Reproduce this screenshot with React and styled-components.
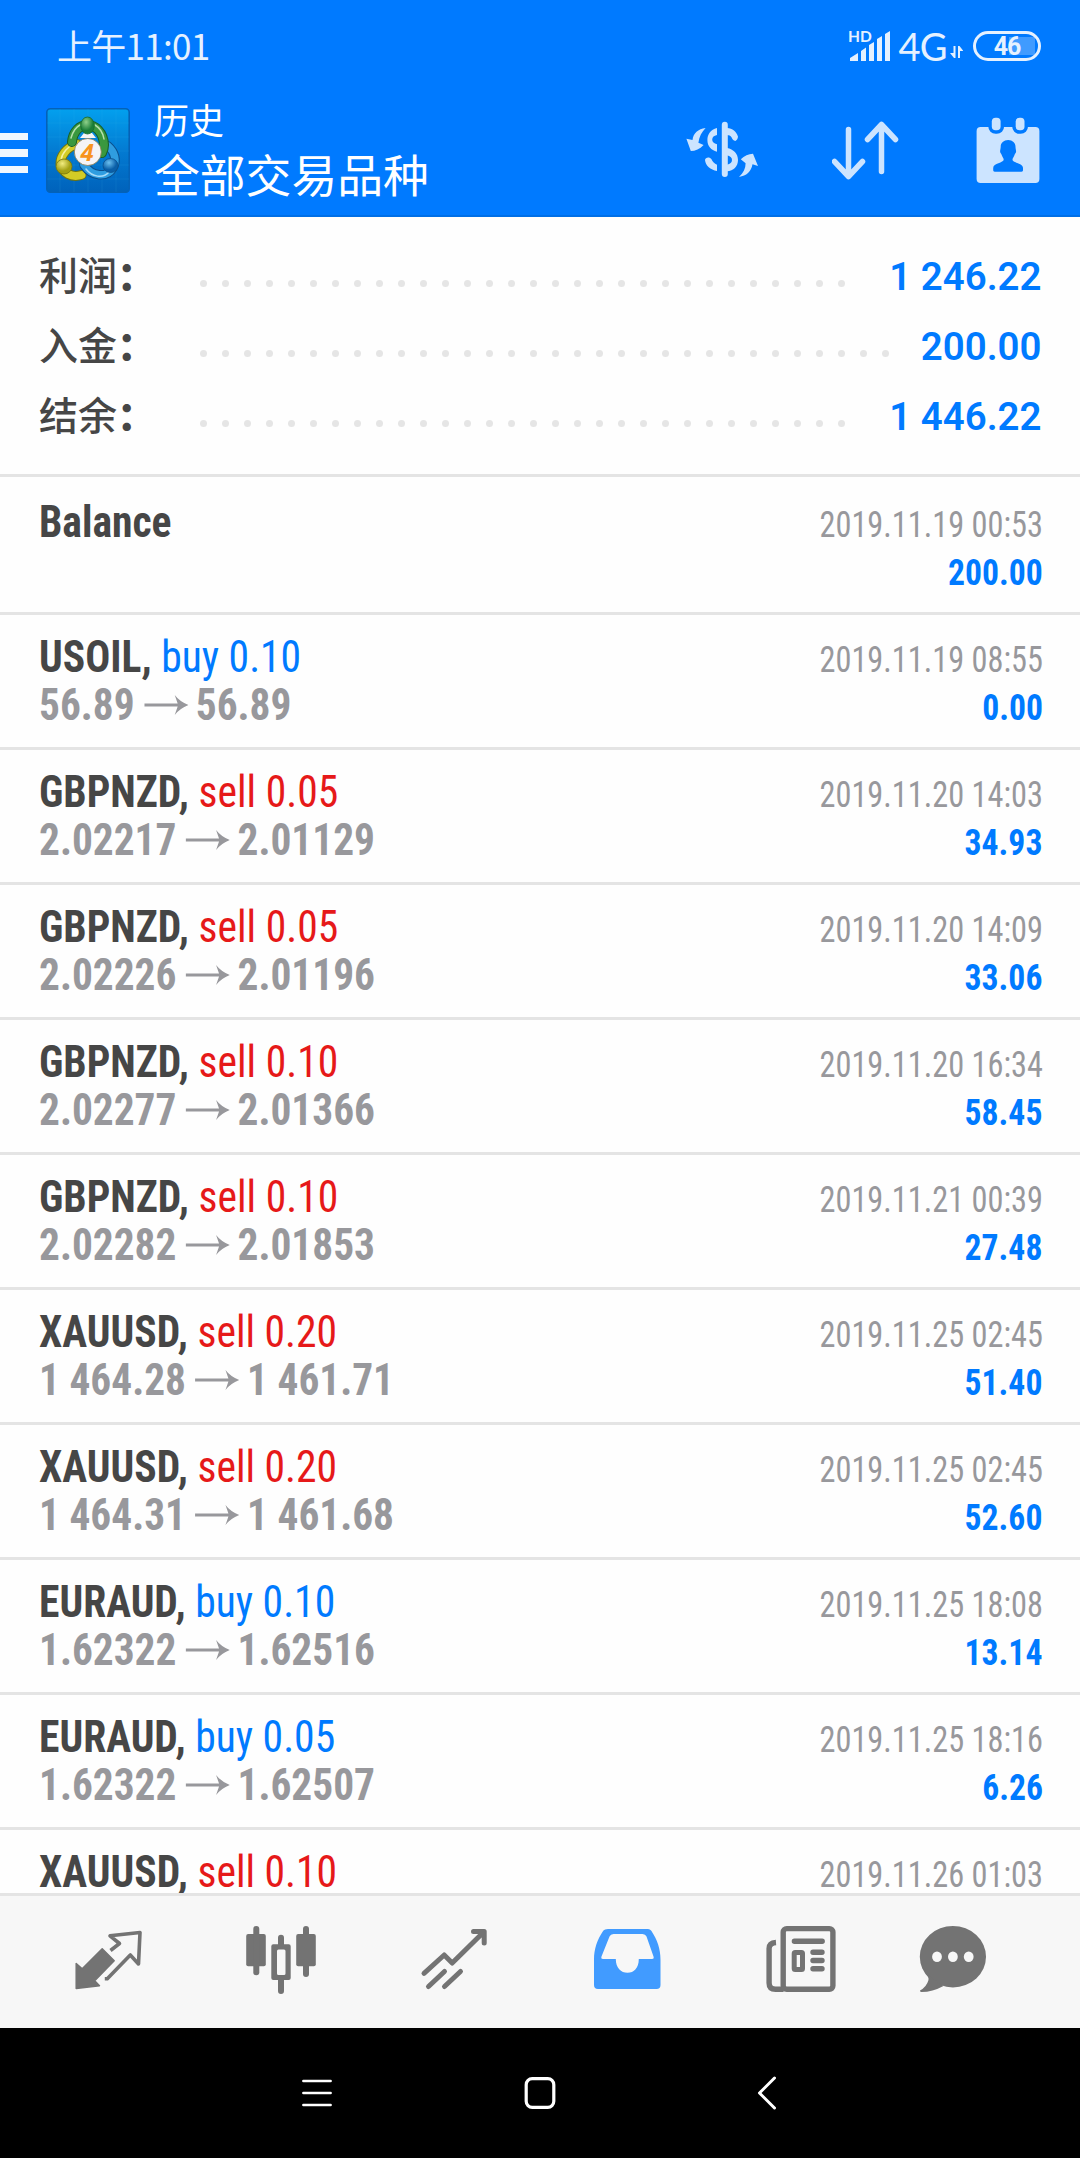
import React from "react";
import styled, { createGlobalStyle } from "styled-components";

const GlobalStyle = createGlobalStyle`
    * {
        box-sizing: border-box;
    }

    body {
        margin: 0;
        background: #fefefe;
        font-family: Roboto, "Noto Sans CJK SC", sans-serif;
    }

    svg {
        display: block;
        flex: none;
    }
`;

const Screen = styled.div`
    display: flex;
    flex-direction: column;
    width: 1080px;
    height: 2158px;
    overflow: hidden;
    background: #fefefe;
`;

const StatusBar = styled.div`
    display: flex;
    align-items: center;
    justify-content: space-between;
    height: 92px;
    padding: 0 39px 0 57px;
    background: #007aff;
`;

const Clock = styled.div`
    margin-top: -3px;
    font-family: "Noto Sans CJK SC", sans-serif;
    font-size: 35px;
    font-weight: 400;
    line-height: 40px;
    letter-spacing: -0.7px;
    color: #e5f1ff;
`;

const StatusIcons = styled.div`
    display: flex;
    align-items: center;
    color: #e5f1ff;
`;

const Network = styled.span`
    margin: 0 3px 0 7px;
    font-family: Lato, sans-serif;
    font-size: 38px;
    line-height: 38px;
    letter-spacing: -0.6px;
`;

const Battery = styled.div`
    display: flex;
    align-items: center;
    justify-content: center;
    width: 68px;
    height: 30px;
    margin-left: 10px;
    border: 3px solid #e5f1ff;
    border-radius: 15px;
    background: linear-gradient(#409bff, #409bff) 33px 3px / 26px 18px no-repeat;
    font-size: 25px;
    font-weight: 700;
    letter-spacing: -1px;
`;

const Header = styled.header`
    display: flex;
    align-items: flex-start;
    height: 125px;
    padding: 0 40px 0 0;
    border-bottom: 2px solid #006fe6;
    background: #007aff;
    color: #cce4ff;
`;

const MenuButton = styled.div`
    display: flex;
    flex-direction: column;
    gap: 9px;
    width: 28px;
    margin-top: 41px;

    span {
        height: 7.3px;
        background: #f0f7ff;
    }
`;

const LogoBox = styled.div`
    margin: 16px 24px 0 18px;
`;

const Titles = styled.div`
    flex: 1;
    color: #fff;
    font-family: "Noto Sans CJK SC", sans-serif;
    font-weight: 400;
`;

const Caption = styled.div`
    margin-top: 6px;
    font-size: 35px;
    line-height: 42px;
`;

const Heading = styled.div`
    font-size: 45.8px;
    line-height: 66px;
`;

const Actions = styled.div`
    display: flex;
    gap: 74px;
    margin-top: 24px;
`;

const Summary = styled.section`
    height: 260px;
    padding: 24px 39px 0 39px;
    border-bottom: 3px solid #e4e4e4;
`;

const SummaryRow = styled.div`
    display: flex;
    align-items: center;
    height: 70px;
`;

const SummaryLabel = styled.div`
    width: 161px;
    margin-top: -7px;
    font-family: "Noto Sans CJK SC", sans-serif;
    font-size: 39px;
    font-weight: 500;
    color: #464646;

    b {
        font-weight: 900;
    }
`;

/* dots that do not fit wrap onto a clipped second line */
const Leader = styled.div`
    display: flex;
    flex: 1;
    flex-wrap: wrap;
    gap: 15px;
    height: 7px;
    margin: 14px 27px 0 0;
    overflow: hidden;

    i {
        width: 7px;
        height: 7px;
        border-radius: 50%;
        background: #e5e5e5;
    }
`;

const SummaryValue = styled.div`
    margin-top: 2px;
    font-size: 39px;
    font-weight: 600;
    color: #007aff;
    transform: scaleX(0.985);
    transform-origin: right;
`;

const List = styled.main`
    flex: 1;
    min-height: 0;
    padding-top: 3px;
    overflow: hidden;
    font-family: "Roboto Condensed", Roboto, sans-serif;
    font-stretch: 75%;
`;

const Deal = styled.div`
    height: 135px;
    padding: 18px 37.5px 0 39px;
    border-bottom: 3px solid #e4e4e4;
`;

const Line = styled.div`
    display: flex;
    align-items: baseline;
    justify-content: space-between;
    height: 48px;
    line-height: 48px;
    white-space: pre;
`;

const Title = styled.div`
    font-size: 44px;
    transform: scaleX(0.945);
    transform-origin: left;
`;

const SymbolName = styled.span`
    font-weight: 700;
    color: #464646;
`;

const Side = styled.span`
    font-weight: 400;
    color: ${({ $type }) => ($type === "buy" ? "#007aff" : "#e61919")};
`;

const Prices = styled.div`
    display: flex;
    align-items: baseline;
    font-size: 44px;
    font-weight: 700;
    color: #98989c;
    transform: scaleX(0.94);
    transform-origin: left;

    &:empty::before {
        content: "\\200b";
    }

    svg {
        align-self: center;
        margin: 0 8px 0 10px;
    }
`;

const Time = styled.span`
    font-size: 37px;
    color: #98989c;
    transform: scaleX(0.873);
    transform-origin: right;
`;

const Profit = styled.span`
    font-size: 36.5px;
    font-weight: 700;
    color: #007aff;
    transform: scaleX(0.922);
    transform-origin: right;
`;

const TabBar = styled.nav`
    display: flex;
    gap: 97px;
    height: 135px;
    padding: 28px 0 0 71px;
    border-top: 3px solid #e4e4e4;
    background: #f7f7f7;
    color: #737373;

    svg:last-child {
        margin-left: -20px;
    }
`;

const SystemBar = styled.footer`
    display: flex;
    align-items: center;
    gap: 189px;
    height: 130px;
    padding-left: 300px;
    background: #000;
`;

const Signal = () => (
    <svg width="44" height="36" viewBox="847 26 44 36" fill="currentColor">
        <text x="848" y="40" fontSize="15.5" fontWeight="700" fontFamily="Lato, sans-serif">
            HD
        </text>
        <path d="M850 59v-3l8-5v8zM861 59V49l5-3.5V59zM869 59V43l5-3V59zM877 59V37l5-3v25zM885 59V32l5-3v30z" />
    </svg>
);

const DataArrows = () => (
    <svg width="13" height="36" viewBox="950 28 13 36" fill="currentColor">
        <path d="M953.5 46h2v12h-1.5l-4-5h3.500zM958 46h1.500l4 5h-3.500v7h-2z" />
    </svg>
);

const Logo = () => (
    <svg width="84" height="85" viewBox="46 108 84 85">
        <defs>
            <linearGradient id="tile" x1="0" y1="0" x2="0" y2="1">
                <stop offset="0" stopColor="#03a0ee" />
                <stop offset="0.5" stopColor="#037bd2" />
                <stop offset="1" stopColor="#0062bb" />
            </linearGradient>
            <radialGradient id="green" cx="0.4" cy="0.3">
                <stop offset="0" stopColor="#8fd08a" />
                <stop offset="1" stopColor="#1c7f38" />
            </radialGradient>
            <radialGradient id="yellow" cx="0.4" cy="0.3">
                <stop offset="0" stopColor="#f2ec80" />
                <stop offset="1" stopColor="#a3a012" />
            </radialGradient>
            <radialGradient id="blue" cx="0.4" cy="0.3">
                <stop offset="0" stopColor="#6cc0ef" />
                <stop offset="1" stopColor="#0a5fa8" />
            </radialGradient>
        </defs>
        <rect x="46.800" y="108.800" width="82.400" height="83.400" rx="3.500" fill="url(#tile)" stroke="#0462b8" strokeWidth="1.600" />
        <path d="M60 109v83M74 109v83M88 109v83M102 109v83M116 109v83M47 123h82M47 137h82M47 151h82M47 165h82M47 179h82" stroke="#4db9f2" strokeOpacity="0.12" />
        <g fill="none" strokeLinecap="round">
            <path d="M77 144c-10 3-17 12-16.500 20 2 9 11 14 21 11" stroke="#6f7410" strokeWidth="10" />
            <path d="M77 144c-10 3-17 12-16.500 20 2 9 11 14 21 11" stroke="#d3cc26" strokeWidth="8" />
            <path d="M76 143c-8 3-14 10-15 17" stroke="#f5f0a0" strokeWidth="1.500" />
            <path d="M108 146c7 6 9 15 5 22-6 10-21 9-29-3" stroke="#0b4f8c" strokeWidth="9.500" />
            <path d="M108 146c7 6 9 15 5 22-6 10-21 9-29-3" stroke="#2f9de0" strokeWidth="7.500" />
            <path d="M86 169c6 8 17 10 23 3" stroke="#a8dcf8" strokeWidth="1.500" />
            <path d="M72 142c1-11 8-17 15.500-17s16 7 16.500 20c0 3-.5 5-2 8" stroke="#175f26" strokeWidth="10" />
            <path d="M72 142c1-11 8-17 15.500-17s16 7 16.500 20c0 3-.5 5-2 8" stroke="#3a983f" strokeWidth="8" />
            <path d="M71 138c2-7 5-11 9-13M95 125c5 3 8 8 9 14" stroke="#b5e0ac" strokeWidth="1.500" />
        </g>
        <path d="M80 138l4-5h8l4 5z" fill="#f5f5f5" />
        <ellipse cx="87.500" cy="125.500" rx="6.800" ry="8.500" fill="url(#green)" stroke="#176a2c" strokeWidth="0.800" />
        <ellipse cx="64" cy="166.500" rx="8" ry="7.500" fill="url(#yellow)" stroke="#77760d" strokeWidth="0.800" />
        <ellipse cx="110.500" cy="165.500" rx="7.500" ry="7" fill="url(#blue)" stroke="#0b4f8c" strokeWidth="0.800" />
        <circle cx="87.800" cy="152" r="13.500" fill="#f4f4f6" stroke="#8a7a50" strokeWidth="0.800" />
        <text x="87" y="160.500" textAnchor="middle" fontFamily="Open Sans, sans-serif" fontSize="24" fontWeight="700" fontStyle="italic" fill="#f7941e">
            4
        </text>
    </svg>
);

const CurrencyIcon = () => (
    <svg width="72" height="70" viewBox="686 116 72 70" fill="currentColor">
        <rect x="721.800" y="121.700" width="6" height="55.300" rx="3" />
        <path d="M717 128c-6.500 1.500-9.600 6.500-9.600 12 0 6 3.600 10.200 9.600 11.700v-7.400c-3-1-4.800-2.300-4.800-4.600 0-2.700 1.800-4 4.800-4.700z" />
        <path d="M717 171v-6.300c-2.500-1-4.500-3-5.500-5.400-2-3-6.300-2-6.500.8.500 5.500 5.500 10 12 10.900z" />
        <path d="M727 128c5.500.5 9.500 3.500 11 8.700-.3 2.200-1.300 3.500-2.600 4.300-2-.2-3.200-1.800-3.900-3.700-1-1.500-2.500-2.300-4.500-2.300z" />
        <path d="M727 148c6.500 1.300 11 5.500 11 12s-4.500 11-11 11.300v-6.600c3.200-.6 5-2.200 5-4.700s-2-4-5-4.700z" />
        <path d="M705.600 128c-7.600 1-12.200 5-13.100 12l-6.100-1.300 4.400 12.300c4.500 0 9-2 12.800-6l-5.200-2.300c.8-6 3.300-10.700 7.200-14.700z" />
        <path d="M739 177c4.500-4 6.600-8.500 6.600-13.700l-4.800-4c3.500-3.500 7.700-5.500 12.200-5.600l5 12.300-5.500-1.700c-1.500 7.500-6 11.500-13.500 12.700z" />
    </svg>
);

const SortIcon = () => (
    <svg width="70" height="70" viewBox="832 116 70 70" fill="none" stroke="currentColor" strokeWidth="5.500" strokeLinecap="round" strokeLinejoin="round">
        <path d="M848.500 129.500v47M834.500 161.500l14 15 14-15M881.500 171.500v-47M867.500 139.500l14-15 14 15" />
    </svg>
);

const CalendarIcon = () => (
    <svg width="64" height="70" viewBox="976 116 64 70" fill="currentColor">
        <rect x="976.600" y="127" width="62.800" height="56" rx="4" />
        <g stroke="#007aff" strokeWidth="7" paintOrder="stroke">
            <rect x="991.800" y="117.700" width="8.800" height="12.600" rx="3.800" />
            <rect x="1015.700" y="117.700" width="8.800" height="12.600" rx="3.800" />
        </g>
        <path
            fill="#007aff"
            d="M1008.200 140c4.300 0 7.300 3 7.300 6.700 0 1.800.6 3.300.6 4.800 0 1.700-1.200 2-1.600 3.500-.5 2-2 3-2 4.500 0 3.500 10.500 3.500 10.500 8.500v2c0 1-.5 1.700-1.500 1.700h-26.800c-1 0-1.500-.7-1.500-1.700v-2c0-5 10.500-5 10.500-8.500 0-1.500-1.500-2.500-2-4.500-.4-1.500-1.600-1.800-1.600-3.500 0-1.500.6-3 .6-4.800 0-3.700 3-6.700 7.500-6.700z"
        />
    </svg>
);

const PriceArrow = () => (
    <svg width="47" height="20" viewBox="0 0 45 20" preserveAspectRatio="none" fill="currentColor">
        <path d="M0 8.500h34L31 0q5 6.500 14 10-9 3.500-14 10l3-8.500H0z" />
    </svg>
);

const QuotesIcon = () => (
    <svg width="76" height="76" viewBox="71 1924 76 76">
        <path
            fill="currentColor"
            stroke="currentColor"
            strokeWidth="1.500"
            strokeLinejoin="round"
            d="M76.200 1963.500v25l23.300-2.800-4.800-5 19.500-20-12-12-20 20z"
        />
        <path
            fill="none"
            stroke="currentColor"
            strokeWidth="3.600"
            strokeLinejoin="round"
            d="M110.500 1950.500l9-7-9.500-7.700 30-3.300-1.500 31.500-8.200-9-23 23.700h-2.500"
        />
    </svg>
);

const CandlesIcon = () => (
    <svg width="76" height="76" viewBox="244 1924 76 76" fill="currentColor">
        <rect x="246.200" y="1934" width="19.600" height="32.300" rx="2" />
        <rect x="253.300" y="1926" width="6" height="49.300" rx="3" />
        <path fillRule="evenodd" d="M273.300 1944.300h15.400q2 0 2 2v31.700q0 2-2 2h-15.400q-2 0-2-2v-31.700q0-2 2-2zM278.500 1949.500q-1.500 0-1.500 1.500v22.500q0 1.500 1.500 1.500h5.500q1.500 0 1.500-1.500V1951q0-1.500-1.500-1.500z" />
        <path d="M278 1945v-7.300q0-3 3-3t3 3v7.300zM278 1979v12q0 3 3 3t3-3v-12z" />
        <rect x="296.200" y="1934" width="19.600" height="32.300" rx="2" />
        <rect x="303" y="1926" width="6" height="51" rx="3" />
    </svg>
);

const TrendIcon = () => (
    <svg width="76" height="76" viewBox="417 1924 76 76" fill="none" stroke="currentColor" strokeWidth="5" strokeLinecap="round" strokeLinejoin="round">
        <path d="M424 1973.300l20.200-18.300 8 8 31-30.500M473.500 1931.500h10.700v11.500" />
        <path d="M428.500 1986.500l16-15M444.500 1986.500l16-15" />
    </svg>
);

const HistoryIcon = () => (
    <svg width="76" height="76" viewBox="590 1924 76 76" fill="#419bff">
        <path
            fillRule="evenodd"
            d="M608 1929h40q2 0 3.300 1.800c6 9 9.200 18 9.200 29.200v25q0 4-4 4h-58.500q-4 0-4-4v-25c0-11.200 3.200-20.200 9.200-29.200q1.300-1.800 4.800-1.800zM613.500 1934q-3 0-4 2.500l-8 20q-.8 2.500 1.500 2.500h12.800c0 9 5.200 13.800 11.700 13.800s11.300-4.800 11.300-13.800h13.200q2.300 0 1.500-2.500l-7-20q-1-2.500-4-2.500z"
        />
    </svg>
);

const NewsIcon = () => (
    <svg width="76" height="76" viewBox="763 1924 76 76" fill="none" stroke="currentColor" strokeWidth="5.400" strokeLinecap="round">
        <rect x="783.200" y="1928.600" width="49.700" height="60.700" rx="3.500" />
        <path d="M776 1942.500q-6.900.5-6.900 6v34.500q0 6.300 6.500 6.300h8" strokeLinecap="butt" />
        <path d="M794.400 1941.300h27.800M813 1952.300h9M813 1960.500h9M813 1968.800h9" />
        <rect x="794.200" y="1952.600" width="8.300" height="16.800" rx="1" strokeWidth="5" />
    </svg>
);

const ChatIcon = () => (
    <svg width="76" height="76" viewBox="916 1924 76 76" fill="currentColor">
        <ellipse cx="952.900" cy="1956.700" rx="33.100" ry="30.700" />
        <path d="M925 1973q4 3 3.500 7-2 7-8.500 10.500 0 1.500 1.500 1.500 11 0 22-6z" />
        <g fill="#f7f7f7">
            <ellipse cx="937" cy="1956.700" rx="4.900" ry="5.200" />
            <ellipse cx="952.900" cy="1956.700" rx="4.900" ry="5.200" />
            <ellipse cx="968.700" cy="1956.700" rx="4.900" ry="5.200" />
        </g>
    </svg>
);

const NavMenu = () => (
    <svg width="34" height="34" viewBox="0 0 34 34" stroke="#fff" strokeWidth="2.600" strokeLinecap="round">
        <path d="M3.400 5h27.200M3.400 17h27.200M3.400 29h27.200" />
    </svg>
);

const NavHome = () => (
    <svg width="34" height="34" viewBox="0 0 34 34" fill="none" stroke="#fff" strokeWidth="3.200">
        <rect x="3.200" y="2.700" width="27.600" height="28.600" rx="6" />
    </svg>
);

const NavBack = () => (
    <svg width="34" height="34" viewBox="0 0 34 34" fill="none" stroke="#fff" strokeWidth="3" strokeLinecap="round" strokeLinejoin="round">
        <path d="M28.500 2l-15 15 15 15" />
    </svg>
);

const totals = [
    { label: "利润", value: "1 246.22" },
    { label: "入金", value: "200.00" },
    { label: "结余", value: "1 446.22" }
];

const deals = [
    { symbol: "Balance", time: "2019.11.19 00:53", profit: "200.00" },
    { symbol: "USOIL", type: "buy", lots: "0.10", open: "56.89", close: "56.89", time: "2019.11.19 08:55", profit: "0.00" },
    { symbol: "GBPNZD", type: "sell", lots: "0.05", open: "2.02217", close: "2.01129", time: "2019.11.20 14:03", profit: "34.93" },
    { symbol: "GBPNZD", type: "sell", lots: "0.05", open: "2.02226", close: "2.01196", time: "2019.11.20 14:09", profit: "33.06" },
    { symbol: "GBPNZD", type: "sell", lots: "0.10", open: "2.02277", close: "2.01366", time: "2019.11.20 16:34", profit: "58.45" },
    { symbol: "GBPNZD", type: "sell", lots: "0.10", open: "2.02282", close: "2.01853", time: "2019.11.21 00:39", profit: "27.48" },
    { symbol: "XAUUSD", type: "sell", lots: "0.20", open: "1 464.28", close: "1 461.71", time: "2019.11.25 02:45", profit: "51.40" },
    { symbol: "XAUUSD", type: "sell", lots: "0.20", open: "1 464.31", close: "1 461.68", time: "2019.11.25 02:45", profit: "52.60" },
    { symbol: "EURAUD", type: "buy", lots: "0.10", open: "1.62322", close: "1.62516", time: "2019.11.25 18:08", profit: "13.14" },
    { symbol: "EURAUD", type: "buy", lots: "0.05", open: "1.62322", close: "1.62507", time: "2019.11.25 18:16", profit: "6.26" },
    { symbol: "XAUUSD", type: "sell", lots: "0.10", time: "2019.11.26 01:03" }
];

function DealRow({ deal }) {
    const { symbol, type, lots, open, close, time, profit } = deal;

    return (
        <Deal>
            <Line>
                <Title>
                    <SymbolName>{type ? `${symbol}, ` : symbol}</SymbolName>
                    {type && <Side $type={type}>{`${type} ${lots}`}</Side>}
                </Title>
                <Time>{time}</Time>
            </Line>
            <Line>
                <Prices>
                    {open && (
                        <>
                            <span>{open}</span>
                            <PriceArrow />
                            <span>{close}</span>
                        </>
                    )}
                </Prices>
                <Profit>{profit}</Profit>
            </Line>
        </Deal>
    );
}

export default function App() {
    return (
        <Screen>
            <GlobalStyle />
            <StatusBar>
                <Clock>上午11:01</Clock>
                <StatusIcons>
                    <Signal />
                    <Network>4G</Network>
                    <DataArrows />
                    <Battery>46</Battery>
                </StatusIcons>
            </StatusBar>
            <Header>
                <MenuButton>
                    <span />
                    <span />
                    <span />
                </MenuButton>
                <LogoBox>
                    <Logo />
                </LogoBox>
                <Titles>
                    <Caption>历史</Caption>
                    <Heading>全部交易品种</Heading>
                </Titles>
                <Actions>
                    <CurrencyIcon />
                    <SortIcon />
                    <CalendarIcon />
                </Actions>
            </Header>
            <Summary>
                {totals.map(({ label, value }) => (
                    <SummaryRow key={label}>
                        <SummaryLabel>
                            {label}
                            <b>：</b>
                        </SummaryLabel>
                        <Leader>
                            {Array.from({ length: 36 }, (_, i) => (
                                <i key={i} />
                            ))}
                        </Leader>
                        <SummaryValue>{value}</SummaryValue>
                    </SummaryRow>
                ))}
            </Summary>
            <List>
                {deals.map((deal, i) => (
                    <DealRow key={i} deal={deal} />
                ))}
            </List>
            <TabBar>
                <QuotesIcon />
                <CandlesIcon />
                <TrendIcon />
                <HistoryIcon />
                <NewsIcon />
                <ChatIcon />
            </TabBar>
            <SystemBar>
                <NavMenu />
                <NavHome />
                <NavBack />
            </SystemBar>
        </Screen>
    );
}
